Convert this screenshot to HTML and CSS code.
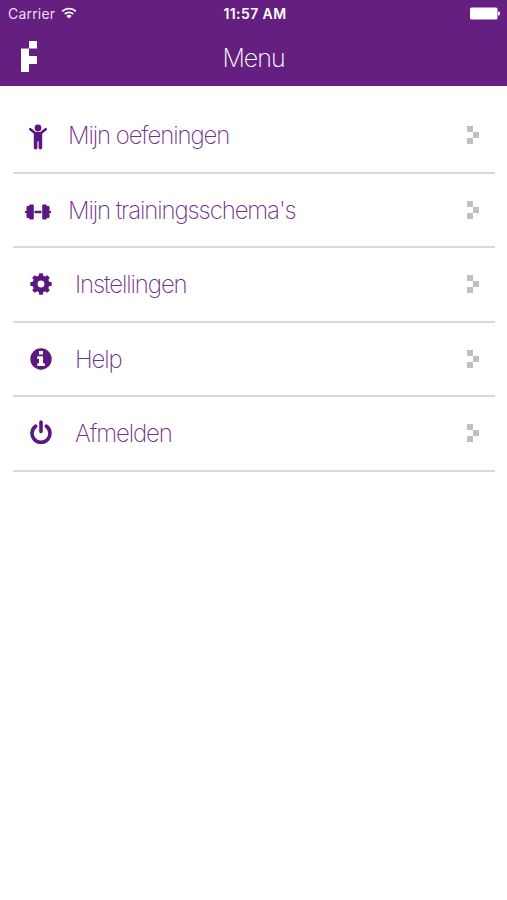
FILE: index.html
```
<!doctype html>
<html lang="nl">
<head>
<meta charset="utf-8" />
<title>Menu</title>
<link rel="stylesheet" href="styles.css">
</head>
<body>

<header>
	<div class="status">
		<div class="carrier">
			<span>Carrier</span>
			<svg class="wifi" viewBox="0 0 16 12" width="16" height="12">
				<path d="M1.2 4.3a9.8 9.8 0 0 1 13.6 0M3.8 7a6 6 0 0 1 8.4 0" />
				<path class="dot" d="M8 11.6L5.4 9a3.7 3.7 0 0 1 5.2 0z" />
			</svg>
		</div>
		<div class="time">11:57 AM</div>
		<div class="battery">
			<svg viewBox="0 0 30 13" width="30" height="13">
				<rect x="0" y="0.5" width="27.5" height="12" rx="1.5" />
				<rect x="28" y="4.5" width="1.8" height="4" rx="0.8" />
			</svg>
		</div>
	</div>
	<div class="titlebar">
		<svg class="logo" viewBox="0 0 16 31" width="16" height="31">
			<path d="M8 0h8v7.5H8zM0 7.5h8V15h8v8H8v8H0z" />
		</svg>
		<h1>Menu</h1>
	</div>
</header>

<nav>
	<a class="item exercises">
		<svg class="icon" viewBox="0 0 18 26" width="18" height="26">
			<circle cx="9" cy="4" r="3.4" />
			<path class="arms" d="M1.3 5.2l5 4h5.4l5-4" />
			<path d="M4.8 8.2h8.4v15.6a1.7 1.7 0 0 1-3.6 0V17.5H8.4v6.3a1.7 1.7 0 0 1-3.6 0z" />
		</svg>
		<span class="label">Mijn oefeningen</span>
		<svg class="arrow" viewBox="0 0 12 18" width="12" height="18">
			<path d="M0 0h6v6H0zM6 6h6v6H6zM0 12h6v6H0z" />
		</svg>
	</a>
	<a class="item schedules">
		<svg class="icon" viewBox="0 0 26 16" width="26" height="16">
			<path d="M0 6.9h2v2.2H0zM9.5 6.7h7v2.6h-7zM24 6.9h2v2.2h-2z" />
			<rect x="1.5" y="2" width="3.6" height="12" rx="1" />
			<rect x="4.2" y="0.5" width="4.6" height="15" rx="1" />
			<rect x="17.2" y="0.5" width="4.6" height="15" rx="1" />
			<rect x="20.9" y="2" width="3.6" height="12" rx="1" />
		</svg>
		<span class="label">Mijn trainingsschema's</span>
		<svg class="arrow" viewBox="0 0 12 18" width="12" height="18">
			<path d="M0 0h6v6H0zM6 6h6v6H6zM0 12h6v6H0z" />
		</svg>
	</a>
	<a class="item settings">
		<svg class="icon" viewBox="-11 -11 22 22" width="22" height="22">
			<circle class="ring" r="5.9" />
			<g id="teeth">
				<path d="M-2.4-7l.6-3.7h3.6l.6 3.7zM-2.4 7l.6 3.7h3.6l.6-3.7zM-7-2.4l-3.7.6v3.6l3.7.6zM7-2.4l3.7.6v3.6l-3.7.6z" />
			</g>
			<use href="#teeth" transform="rotate(45)" />
		</svg>
		<span class="label">Instellingen</span>
		<svg class="arrow" viewBox="0 0 12 18" width="12" height="18">
			<path d="M0 0h6v6H0zM6 6h6v6H6zM0 12h6v6H0z" />
		</svg>
	</a>
	<a class="item help">
		<svg class="icon" viewBox="0 0 22 22" width="22" height="22">
			<circle cx="11" cy="11" r="10.7" />
			<path class="cutout" d="M9 3h4v3.4H9zM7.3 8.2H13v7h1.8V18H7.3v-2.8H9v-4.2H7.3z" />
		</svg>
		<span class="label">Help</span>
		<svg class="arrow" viewBox="0 0 12 18" width="12" height="18">
			<path d="M0 0h6v6H0zM6 6h6v6H6zM0 12h6v6H0z" />
		</svg>
	</a>
	<a class="item logout">
		<svg class="icon" viewBox="0 0 22 24" width="22" height="24">
			<path class="line" d="M5.6 6.2a9 9 0 1 0 10.8 0M11 2v9.5" />
		</svg>
		<span class="label">Afmelden</span>
		<svg class="arrow" viewBox="0 0 12 18" width="12" height="18">
			<path d="M0 0h6v6H0zM6 6h6v6H6zM0 12h6v6H0z" />
		</svg>
	</a>
</nav>

</body>
</html>
```
FILE: styles.css
```
body {
	margin: 0;
	background-color: white;
	font-family: Inter, "Liberation Sans", sans-serif;
}

header {
	height: 86px;
	background-color: #641f80;
	color: white;
}

.status {
	display: grid;
	grid-template-columns: 1fr auto 1fr;
	align-items: center;
	height: 27px;
	padding: 0 7px 0 8px;
	font-size: 14px;
}
.carrier {
	display: flex;
	align-items: center;
	gap: 6px;
	color: #eadff0;
	letter-spacing: 0.2px;
}
.wifi {
	margin-top: -2px;
	fill: none;
	stroke: white;
	stroke-width: 1.8;
}
.wifi .dot {
	fill: white;
	stroke: none;
}
.time {
	font-weight: 600;
	font-size: 14px;
	letter-spacing: 0.4px;
	margin-left: 2px;
}
.battery {
	display: flex;
	justify-content: flex-end;
	fill: white;
}

.titlebar {
	display: grid;
	grid-template-columns: 1fr auto 1fr;
	align-items: center;
	height: 59px;
	padding: 0 21px;
}
.logo {
	fill: white;
}
h1 {
	margin: 2px 0 0;
	font-size: 25px;
	font-weight: 200;
	letter-spacing: -1px;
}

nav {
	padding: 13px 12px 0 13px;
}
.item {
	display: flex;
	align-items: center;
	box-sizing: border-box;
	height: 74.5px;
	padding-right: 16px;
	border-bottom: 2px solid #d9d9d9;
	color: #6f2f8c;
}
.icon {
	flex: none;
	fill: #5d1780;
}
.label {
	flex: 1;
	padding-top: 1px;
	font-size: 24px;
	font-weight: 200;
	letter-spacing: -1.1px;
}
.arrow {
	fill: #c0c0c0;
}

.exercises .icon {
	margin: 4px 21px 0 16px;
}
.schedules .icon {
	margin: 4px 17px 0 12px;
}
.settings .icon,
.help .icon,
.logout .icon {
	margin: 0 23px 0 17px;
}
.logout .icon {
	margin-bottom: 2px;
}

.arms,
.line {
	fill: none;
	stroke: #5d1780;
	stroke-linecap: round;
	stroke-width: 2.6;
}
.line {
	stroke-width: 3.6;
}
.ring {
	fill: none;
	stroke: #5d1780;
	stroke-width: 5;
}
.cutout {
	fill: white;
}
```
